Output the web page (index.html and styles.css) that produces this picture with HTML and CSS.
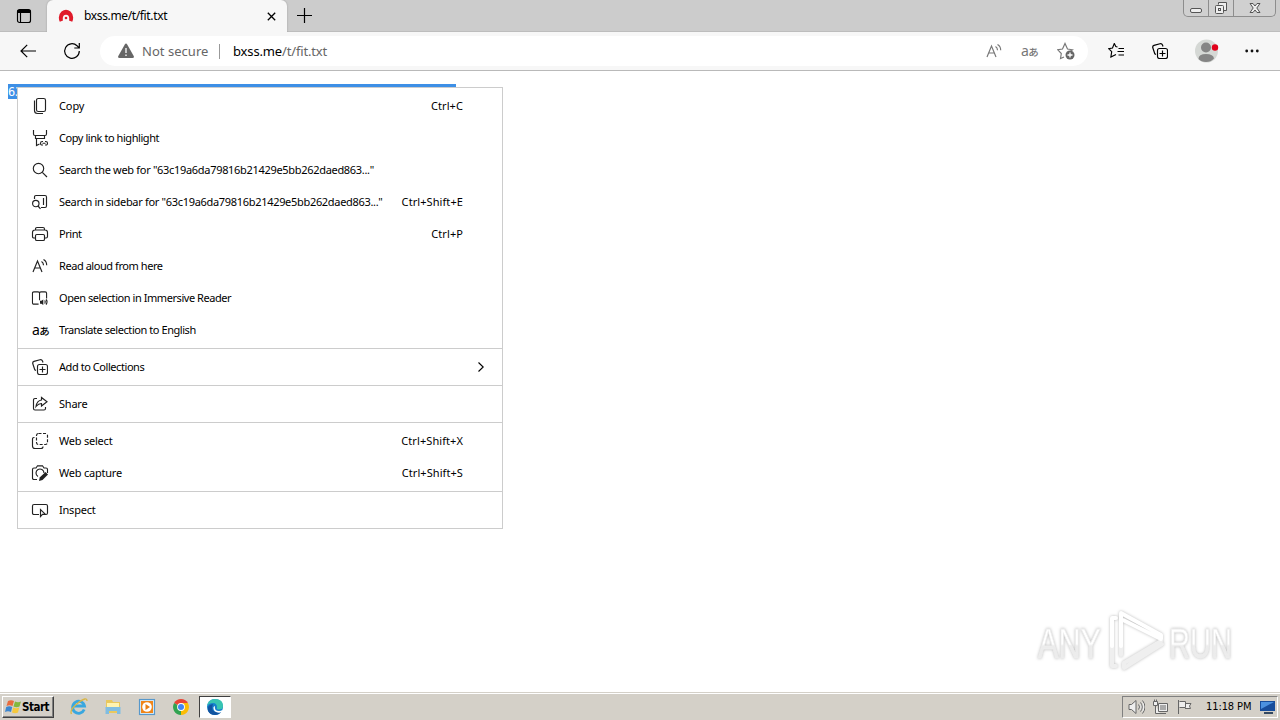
FILE: index.html
```html
<!DOCTYPE html>
<html lang="en">
<head>
<meta charset="utf-8">
<title>bxss.me/t/fit.txt</title>
<link rel="stylesheet" href="styles.css">
</head>
<body>
<svg width="0" height="0" class="defs">
  <symbol id="read" viewBox="0 0 16 16"><path d="M1 14 5.500 3 10 14M2.700 10h5.700M9.500 3.500q2 1.200 2 3.700M11.500 1.500q3.200 1.800 3.200 5.700"/></symbol>
  <symbol id="collect" viewBox="0 0 16 16"><path d="M4 11.500 2.800 10.800 .8 4.800Q.300 3 2 2.400L8 .7Q9.800.300 10.500 2l.5 1.500"/><rect x="5.500" y="5.500" width="10" height="10" rx="2"/><path d="M10.500 7.500v6M7.500 10.500h6"/></symbol>
</svg>
<div class="screen">
  <header class="tabs">
    <div class="tabmenu"><svg width="16" height="16" viewBox="0 0 16 16"><rect x="1.500" y="1.500" width="13" height="13" rx="2"/><path class="solid" d="M1.500 2h13v3h-13z"/><path d="M4.500 5v9"/></svg></div>
    <div class="tab">
      <svg class="favicon" width="16" height="16" viewBox="0 0 16 16"><path d="M1.800 13.800Q-.8 7.500 3.500 3.500 8-.2 12.500 3.500q4.300 4 1.700 10.300L11 12.500q1.100-5.500-3-5.800-4.100.3-3 5.800z"/><circle cx="8" cy="10" r="1.300"/></svg>
      <span class="tabtitle">bxss.me/t/fit.txt</span>
      <svg class="close" width="9" height="9" viewBox="0 0 9 9"><path d="m.8.800 7.400 7.400M8.200.8.800 8.200"/></svg>
    </div>
    <svg class="plus" width="15" height="15" viewBox="0 0 15 15"><path d="M7.500 0v15M0 7.500h15"/></svg>
    <div class="wincontrols">
      <span><svg width="14" height="14" viewBox="0 0 14 14"><rect x="1.500" y="7.500" width="11" height="4" rx="1.500"/></svg></span>
      <span><svg width="14" height="14" viewBox="0 0 14 14"><path d="M4.500 3.500v-2h8v8h-3"/><rect x="1.500" y="4.500" width="8" height="8" rx="1"/><rect x="4.500" y="7.500" width="2" height="2"/></svg></span>
      <span><svg width="12" height="12" viewBox="0 0 12 12"><path d="M1 1.500h3l2 2.500 2-2.500h3L7.800 6l3.200 4.500H8L6 8l-2 2.500H1L4.200 6z"/></svg></span>
    </div>
  </header>
  <nav class="toolbar">
    <svg class="back" width="16" height="14" viewBox="0 0 16 14"><path d="M16 7H1M7.200.8 1 7l6.200 6.200"/></svg>
    <svg class="reload" width="18" height="18" viewBox="0 0 18 18"><path d="M16.300 9A7.300 7.300 0 1 1 14 3.700L16 5.800M16.300 1v5h-5"/></svg>
    <div class="address">
      <svg class="warn" width="16" height="16" viewBox="0 0 16 16"><path d="M6.800 1.500q1.200-1.800 2.400 0l6.500 11.500q.8 2-1.200 2h-13q-2 0-1.200-2z"/><path class="mark" d="M8 5v5M8 11.500v1.600"/></svg>
      <span class="notsecure">Not secure</span><i class="divider"></i>
      <span class="url">bxss.me<em>/t/fit.txt</em></span>
      <div class="actions">
        <svg width="16" height="16"><use href="#read"/></svg>
        <span class="translate">a<i>あ</i></span>
        <svg width="18" height="18" viewBox="0 0 18 18"><path d="m7 15-3.500 1.500.8-5L.8 7.800 5.500 7 8 1.500l2.500 5.500 5 .8-2 1.500"/><circle class="badge" cx="13" cy="13" r="4.500"/><path class="mark" d="M10.500 13h5M13 10.500v5"/></svg>
      </div>
    </div>
    <div class="tools">
      <svg width="17" height="16" viewBox="0 0 17 16"><path d="m9.500 4-1.700-.5L6.300.5 4.500 5 .7 5.700l3 3-.8 5.300L8 11.500M10.500 5.500H16M9.500 8.500H16M10.500 12H16"/></svg>
      <svg width="16" height="16"><use href="#collect"/></svg>
      <svg class="avatar" width="24" height="24" viewBox="0 0 24 24"><circle class="disc" cx="11.500" cy="12" r="11.500"/><circle cx="11" cy="8.500" r="5"/><path d="M3.500 20q0-5 7.500-5t8 4.500q-3 3.500-8 3.500t-7.500-3z"/><circle class="dot" cx="20" cy="8.500" r="3.200"/></svg>
      <svg class="dots" width="14" height="4" viewBox="0 0 14 4"><circle cx="1.700" cy="2" r="1.400"/><circle cx="7" cy="2" r="1.400"/><circle cx="12.300" cy="2" r="1.400"/></svg>
    </div>
  </nav>
  <main class="page">
    <div class="selected">63</div>
    <div class="menu">
      <div class="item"><svg width="16" height="16" viewBox="0 0 16 16"><rect x="4.500" y=".5" width="9" height="13" rx="1.800"/><path d="M2.500 2.500v10q0 3 3 3h5.500"/></svg><span class="wide">Copy</span><kbd>Ctrl+C</kbd></div>
      <div class="item"><svg width="16" height="16" viewBox="0 0 16 16"><path d="M1.500 0v4q0 1.500 1.500 1.500h10q1.500 0 1.500-1.500V0M3.500 5.500V8.500h9v-3M4.500 8.500v7l3-1.500M11 11.500h-.7q-1.800 0-1.800 1.800t1.800 1.700h.7M13 11.500h.7q1.800 0 1.800 1.800t-1.800 1.700H13M10.500 13.200H13.500"/></svg><span class="tight">Copy link to highlight</span></div>
      <div class="item"><svg width="16" height="16" viewBox="0 0 16 16"><circle cx="6.500" cy="6.500" r="5.200"/><path d="m10.300 10.300 4.700 4.700"/></svg><span class="search">Search the web for "63c19a6da79816b21429e5bb262daed863..."</span></div>
      <div class="item"><svg width="16" height="16" viewBox="0 0 16 16"><path d="M2.500 5V3q0-1.500 1.500-1.500h9Q14.500 1.500 14.500 3v9q0 1.500-1.500 1.500H9M11.500 4v7"/><circle cx="3.800" cy="9.500" r="3.200"/><path d="m6 12 2.500 2.800"/></svg><span class="search">Search in sidebar for "63c19a6da79816b21429e5bb262daed863..."</span><kbd>Ctrl+Shift+E</kbd></div>
      <div class="item"><svg width="16" height="16" viewBox="0 0 16 16"><path d="M3.500 4V3q0-1.500 1.500-1.500h6q1.500 0 1.500 1.500v1M3.500 12H2Q.5 12 .5 10.500v-4Q.5 4 3 4h10q2.500 0 2.500 2.500v4q0 1.500-1.500 1.500h-1.500"/><rect x="3.500" y="8.500" width="9" height="6" rx="1.300"/></svg><span class="tight">Print</span><kbd>Ctrl+P</kbd></div>
      <div class="item"><svg width="16" height="16"><use href="#read"/></svg><span class="tight">Read aloud from here</span></div>
      <div class="item"><svg width="17" height="16" viewBox="0 0 17 16"><path d="M7 14.500H2q-1.500 0-1.500-1.500V3Q.5 1.500 2 1.500h4.500Q8 1.500 8 3v7.500M8 3q0-1.500 1.500-1.500H14q1.500 0 1.500 1.500v5.500M13.500 10.500q1.200 1.500 0 3.500M15 9.500q2 2.500 0 5.500"/><path class="solid" d="M8.500 11H10l2-1.500v6L10 14H8.500z"/></svg><span class="tight">Open selection in Immersive Reader</span></div>
      <div class="item"><b class="translate">a<i>あ</i></b><span class="tight">Translate selection to English</span></div>
      <hr>
      <div class="item"><svg width="16" height="16"><use href="#collect"/></svg><span class="tight">Add to Collections</span><svg class="chevron" width="6" height="10" viewBox="0 0 6 10"><path d="m.5.500 4.700 4.500L.5 9.500"/></svg></div>
      <hr>
      <div class="item"><svg width="16" height="16" viewBox="0 0 16 16"><path d="M5 2.500H3Q1.500 2.500 1.500 4v8.500Q1.500 14 3 14h9q1.500 0 1.500-1.500V11M9.500 1.500V4Q5 4.500 4 10.500q2.500-3 5.500-3V10L15 5.800z"/></svg><span>Share</span></div>
      <hr>
      <div class="item"><svg width="16" height="16" viewBox="0 0 16 16"><path d="M2.500 4.500H2Q.5 4.500.5 6v7q0 2.500 2.500 2.500h6q2 0 2-2"/><rect x="4.500" y=".5" width="11" height="11" rx="2" stroke-dasharray="3 1.500"/></svg><span>Web select</span><kbd>Ctrl+Shift+X</kbd></div>
      <div class="item"><svg width="16" height="16" viewBox="0 0 16 16"><path d="M5 14.500H2Q.5 14.500.5 13V4.500Q.5 3 2 3h2L5.500.8h5L12 3h2q1.500 0 1.500 1.500V8M6 11.500A4 4 0 1 1 12 8"/><path class="solid" d="m7 16 .7-3.500L13.500 7l2.500 2.500-5.500 5.500z"/></svg><span>Web capture</span><kbd>Ctrl+Shift+S</kbd></div>
      <hr>
      <div class="item"><svg width="16" height="16" viewBox="0 0 16 16"><path d="M7 12.500H2Q.5 12.500.5 11V4Q.5 2.500 2 2.500h12q1.500 0 1.500 1.500v7q0 1.500-1.500 1.500M8.500 7.500v7l2-2.200h3z"/></svg><span>Inspect</span></div>
    </div>
    <svg class="watermark" width="240" height="80" viewBox="0 0 240 80">
      <defs><linearGradient id="fade" x1="0" y1="0" x2="0" y2="1"><stop offset=".52" stop-color="#fff"/><stop offset=".56" stop-color="#ececec"/></linearGradient></defs>
      <g class="letters"><text x="8" y="52" textLength="63" lengthAdjust="spacingAndGlyphs">ANY</text><text x="139" y="52" textLength="63" lengthAdjust="spacingAndGlyphs">RUN</text></g>
      <path class="play lower" d="M91 39v10M86 60h-4V39M131 35 94 57v5l38-24"/>
      <path class="play" d="M86 12h-4v28M91 40V7l40 22v4L93 14"/>
    </svg>
  </main>
  <footer class="taskbar">
    <div class="start"><svg width="17" height="16" viewBox="0 0 17 16"><path fill="#e86c3e" d="M3 2q3-1.500 6 0L7.500 7q-3-1.500-6 0z"/><path fill="#83b83e" d="M10 2.500q3 1.500 6 0L14.500 7.500q-3 1.500-6 0z"/><path fill="#3c86cf" d="M1.200 8q3-1.500 6 0L6 13q-3-1.500-6 0z"/><path fill="#f5c83d" d="M8.200 8.500q3 1.500 6 0L13 13.500q-3 1.500-6 0z"/></svg><span>Start</span></div>
    <div class="apps">
      <svg width="18" height="18" viewBox="0 0 18 18"><path d="M14.200 11.500A6 6 0 1 1 14.500 8H4" fill="none" stroke="#39a7df" stroke-width="2.800"/><path d="M1.500 16Q-1 12 8 5t9-2" fill="none" stroke="#d9b645" stroke-width="1.300"/></svg>
      <svg width="18" height="18" viewBox="0 0 18 18"><path fill="#e9c85e" d="M2 2h6l1 2h7v11H2z"/><path fill="#fff3b0" d="M3 5h12v5H3z"/><path fill="#80bde2" d="M1.500 9h15v7H13v-3H5v3H1.500z"/></svg>
      <svg width="18" height="18" viewBox="0 0 18 18"><rect x="1.500" y="1.500" width="15" height="15" fill="#d8ecfa" stroke="#5798cb"/><path fill="#f08519" d="M3 3h12v12H3z"/><circle cx="9" cy="9" r="4.800" fill="#fff"/><path fill="#e87e15" d="m7.500 6 4.500 3-4.500 3z"/></svg>
      <svg width="18" height="18" viewBox="0 0 18 18"><path fill="#e94335" d="M9 9 2.100 5A8 8 0 0 1 15.900 5z"/><path fill="#fbbc05" d="M9 9V5h6.900A8 8 0 0 1 9 17z"/><path fill="#31a351" d="M9 9v8A8 8 0 0 1 2.100 5z"/><circle cx="9" cy="9" r="3.900" fill="#fff"/><circle cx="9" cy="9" r="3" fill="#4285f4"/></svg>
      <div class="active"><svg width="18" height="18" viewBox="0 0 18 18"><circle cx="9" cy="9" r="8" fill="#1680cd"/><path fill="#38c5b2" d="M1 8Q2.500 1 9 1q8 0 8 7 0 4-5 3.500-2-.5-1-2Q11 5 7 5 3 5 1 8z"/><path fill="#1254a0" d="M2 13Q.5 7 7 6q-3 7 4 8 3 .5 5-1-3 4-7 4-5 0-7-4z"/><path fill="#fff" d="M9 8q-1 5 4 5 2 0 4-1.500L16 14q-3 1.500-6 0T7.500 9z"/></svg></div>
    </div>
    <div class="tray">
      <svg width="17" height="16" viewBox="0 0 17 16"><path d="M1 5.500h2.500L8 1.500v13l-4.500-4H1zM10.500 5.500q2 2.500 0 5M12.500 3.500q3.500 4.500 0 9M14.500 1.500q5 6.500 0 13"/></svg>
      <svg width="17" height="16" viewBox="0 0 17 16"><path d="M6.500 4.500h9v8h-9zM8 14.500h6M1.500 2.500h4v4h-4zM2.500.5v2M4.500.5v2M3.500 6.500v8H8"/><path class="screenfill" d="M8 6h6v5H8z"/></svg>
      <svg width="17" height="16" viewBox="0 0 17 16"><path d="M2.500 1v14M3.500 2.500h6v6h-6M9.500 4.500h5.500L13.500 7l1 2.500H9"/></svg>
      <time>11:18 PM</time>
      <svg class="desk" width="17" height="16" viewBox="0 0 17 16"><path fill="#174d9b" d="M1 2h15v10H1z"/><path fill="#4b91df" d="M2 3h13L2 10z"/><path fill="#344962" d="M5 13h9v2H5z"/></svg>
    </div>
  </footer>
</div>
</body>
</html>
```
FILE: styles.css
```css
* { box-sizing: border-box; }
body { margin: 0; overflow: hidden; font-family: "Noto Sans", "Noto Sans CJK JP", sans-serif; color: #000; }
svg { display: block; flex: none; fill: none; stroke: currentColor; stroke-width: 1.15; }
.defs { position: absolute; }
.solid { fill: currentColor; stroke: none; }
.screen { width: 1280px; height: 720px; display: grid; grid-template-rows: 32px 39px 621px 28px; }

.tabs { display: flex; align-items: center; background: #ccc; border-bottom: 1px solid #bdbdbd; }
.tabmenu { width: 47px; padding-left: 16px; }
.tab { width: 240px; height: 32px; margin-bottom: -1px; padding: 0 11px; display: flex; align-items: center; background: #f7f7f7; border-radius: 6px 6px 0 0; box-shadow: 0 0 2px #999; clip-path: inset(0 -3px 0 -3px); }
.favicon { fill: #e01b2b; stroke: none; }
.tabtitle { margin: -1px 0 0 10px; font-size: 12px; letter-spacing: -.36px; }
.close { margin-left: auto; stroke-width: 1.3; }
.plus { margin-left: 10px; stroke-width: 1.2; }
.wincontrols { margin: 0 4px 0 auto; align-self: flex-start; display: flex; width: 93px; height: 17px; border: 1px solid #8d8d8d; border-top: 0; border-radius: 0 0 5px 5px; background: #d0d0d0; color: #555; }
.wincontrols span { width: 25px; display: grid; place-items: center; border-right: 1px solid #8d8d8d; }
.wincontrols span:last-child { flex: 1; border: 0; }
.wincontrols svg { fill: #eee; stroke-width: 1; }

.toolbar { display: flex; align-items: center; background: #f7f7f7; border-bottom: 1px solid #b9b9b9; }
.back { margin-left: 20px; stroke-width: 1.2; }
.reload { margin-left: 27px; stroke-width: 1.2; }
.address { width: 988px; height: 30px; margin-left: 19px; padding-left: 18px; border-radius: 15px; background: #fff; display: flex; align-items: center; }
.warn { fill: #666; stroke: none; }
.mark { stroke: #fff; stroke-width: 1.3; }
.notsecure { width: 67px; margin-left: 8px; font-size: 13px; color: #666; letter-spacing: .03px; white-space: nowrap; }
.divider { width: 1px; height: 15px; margin: 0 13px 0 10px; background: #999; }
.url { font-size: 13px; letter-spacing: -.15px; }
.url em { font-style: normal; color: #666; }
.actions { margin-left: auto; margin-right: 13px; width: 89px; display: flex; justify-content: space-between; align-items: center; color: #777; }
.translate { width: 17px; height: 16px; font: 400 14px/15px "Noto Sans", sans-serif; white-space: nowrap; display: flex; }
.translate i { margin-left: -.5px; font: 500 10.5px/17px "Noto Sans CJK JP", sans-serif; }
.badge { fill: #666; stroke: none; }
.tools { margin-left: 20px; display: flex; align-items: center; }
.tools svg + svg { margin-left: 27px; }
.tools .avatar { fill: #858585; stroke: none; }
.avatar .disc { fill: #d5d8d5; }
.avatar .dot { fill: #e1001a; }
.tools .dots { fill: #111; stroke: none; margin-left: 26px; }

.page { position: relative; background: #fff; padding: 13px 8px; }
.selected { width: 448px; height: 15px; overflow: hidden; background: #3d8fe6; color: #fff; font: 12px/17px "DejaVu Sans Mono", monospace; letter-spacing: -.2px; }
.menu { position: absolute; left: 17px; top: 16px; width: 486px; height: 442px; padding: 2px 0; border: 1px solid #ccc; background: #fff; }
.item { height: 32px; padding: 0 18px 0 14px; display: flex; align-items: center; font-size: 11px; white-space: nowrap; }
.item > :first-child { flex: none; width: 17px; margin-right: 10px; }
.item > svg:first-child { width: 16px; margin-right: 11px; color: #222; overflow: visible; }
.item > span { padding-bottom: 2px; letter-spacing: -.22px; }
.item > .tight { letter-spacing: -.44px; }
.item > .search { letter-spacing: -.31px; }
.item > .wide { letter-spacing: -.1px; }
.item kbd { margin-left: auto; margin-right: 21px; padding-bottom: 2px; font: inherit; letter-spacing: .08px; }
.menu hr { height: 1px; margin: 2px 0; border: 0; background: #ccc; }
.chevron { margin-left: auto; }
.watermark { position: absolute; right: 10px; bottom: 6px; filter: drop-shadow(0 0 1.5px #bbb); }
.letters { fill: url(#fade); stroke: #eee; stroke-width: .8; font: 400 43px "Liberation Sans Narrow", "Liberation Sans", sans-serif; }
.play { stroke: #fff; stroke-width: 4; stroke-linejoin: round; stroke-linecap: round; }
.lower { stroke: #efefef; }

.taskbar { display: flex; align-items: center; padding: 3px 2px 3px; background: #d4d0c8; border-top: 1px solid #d4d0c8; box-shadow: inset 0 1px #fff; }
.start { width: 52px; height: 22px; padding-left: 2px; display: flex; align-items: center; border: 1px solid; border-color: #fff #404040 #404040 #fff; box-shadow: inset -1px -1px #808080; font: bold 11.5px "DejaVu Sans Condensed", sans-serif; }
.start svg { stroke: none; }
.start span { letter-spacing: -.5px; }
.apps { display: flex; align-items: center; gap: 16px; margin-left: 16px; }
.apps svg { stroke: none; }
.active { width: 32px; height: 22px; margin-left: -7px; display: grid; place-items: center; background: #fff; border: 1px solid; border-color: #404040 #fff #fff #404040; }
.tray { width: 156px; height: 22px; margin-left: auto; padding: 0 1px 0 5px; display: flex; align-items: center; border: 1px solid; border-color: #808080 #fff #fff #808080; font: 11px "DejaVu Sans Condensed", sans-serif; }
.tray svg { margin-right: 7px; color: #666; fill: #eee; stroke-width: 1; }
.tray .screenfill { fill: #aaa; stroke: none; }
.tray time { margin-left: 6px; white-space: nowrap; letter-spacing: -.1px; }
.tray .desk { margin: 0 0 0 auto; stroke: none; }
```
